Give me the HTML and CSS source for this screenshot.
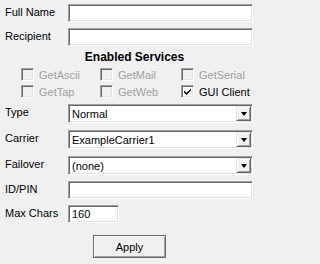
FILE: index.html
```html
<!DOCTYPE html>
<html>
<head>
<meta charset="utf-8">
<link rel="stylesheet" href="styles.css">
</head>
<body>
<div class="form">
  <div class="row r-name"><span class="lbl">Full Name</span><div class="field"></div></div>
  <div class="row r-recip"><span class="lbl">Recipient</span><div class="field"></div></div>
  <div class="title">Enabled Services</div>
  <div class="checks">
    <div class="chk disabled"><span class="box"></span><span class="ctext">GetAscii</span></div>
    <div class="chk disabled"><span class="box"></span><span class="ctext">GetMail</span></div>
    <div class="chk disabled"><span class="box"></span><span class="ctext">GetSerial</span></div>
    <div class="chk disabled"><span class="box"></span><span class="ctext">GetTap</span></div>
    <div class="chk disabled"><span class="box"></span><span class="ctext">GetWeb</span></div>
    <div class="chk"><span class="box checked"><svg width="9" height="9" viewBox="0 0 9 9"><path d="M1 3.5 L3.5 6 L8 1.5 L8 3.5 L3.5 8 L1 5.5 Z" fill="#000"/></svg></span><span class="ctext">GUI Client</span></div>
  </div>
  <div class="row r-type"><span class="lbl">Type</span><div class="select"><span class="sval">Normal</span><span class="dd"><span class="tri"></span></span></div></div>
  <div class="row r-sel"><span class="lbl">Carrier</span><div class="select"><span class="sval">ExampleCarrier1</span><span class="dd"><span class="tri"></span></span></div></div>
  <div class="row r-sel"><span class="lbl">Failover</span><div class="select"><span class="sval">(none)</span><span class="dd"><span class="tri"></span></span></div></div>
  <div class="row r-id"><span class="lbl">ID/PIN</span><div class="field"></div></div>
  <div class="row r-max"><span class="lbl">Max Chars</span><div class="field short"><span class="fval">160</span></div></div>
  <div class="actions"><button class="btn">Apply</button></div>
</div>
</body>
</html>
```

FILE: styles.css
```css
html, body {
  margin: 0;
  padding: 0;
  background: #f0f0f0;
}
body {
  width: 257px;
  height: 264px;
  overflow: hidden;
  font-family: "Liberation Sans", Arial, sans-serif;
  font-size: 11px;
  color: #000;
}
.form {
  display: flex;
  flex-direction: column;
  padding: 4px 4px 0 5px;
}
.row {
  display: flex;
  align-items: center;
}
.lbl {
  width: 63px;
  flex: none;
  line-height: 13px;
  position: relative;
  top: -1px;
}
.r-recip { margin-top: 6px; }
.r-type { margin-top: 4px; }
.r-sel { margin-top: 7px; }
.r-id { margin-top: 6px; }
.r-max { margin-top: 6px; }

.field {
  flex: 1;
  height: 14px;
  background: #fff;
  border-top: 1px solid #a0a0a0;
  border-left: 1px solid #a0a0a0;
  border-bottom: 1px solid #fff;
  border-right: 1px solid #fff;
  box-shadow: inset 1px 1px 0 #696969, inset -1px -1px 0 #e3e3e3;
  padding: 1px 2px;
  display: flex;
  align-items: center;
}
.field.short {
  flex: none;
  width: 45px;
}
.fval { padding-left: 1px; }

.title {
  text-align: center;
  font-weight: bold;
  font-size: 12px;
  line-height: 14px;
  margin-top: 4px;
  padding-left: 11px;
}

.checks {
  display: grid;
  grid-template-columns: 79px 81px auto;
  grid-auto-rows: 17px;
  padding-left: 16px;
  margin-top: 2px;
}
.chk {
  display: flex;
  align-items: center;
  gap: 5px;
}
.chk.disabled .ctext { color: #a0a0a0; }
.box {
  width: 9px;
  height: 9px;
  flex: none;
  background: #f0f0f0;
  border-top: 1px solid #a0a0a0;
  border-left: 1px solid #a0a0a0;
  border-bottom: 1px solid #fff;
  border-right: 1px solid #fff;
  box-shadow: inset 1px 1px 0 #696969, inset -1px -1px 0 #e3e3e3;
  padding: 1px;
  display: flex;
  align-items: center;
  justify-content: center;
}
.box.checked { background: #fff; }
.box svg { display: block; }

.select {
  flex: 1;
  height: 15px;
  background: #fff;
  border-top: 1px solid #a0a0a0;
  border-left: 1px solid #a0a0a0;
  border-bottom: 1px solid #fff;
  border-right: 1px solid #fff;
  box-shadow: inset 1px 1px 0 #696969, inset -1px -1px 0 #e3e3e3;
  padding: 1px 1px 1px 2px;
  display: flex;
  align-items: center;
}
.sval {
  flex: 1;
  padding-left: 1px;
}
.dd {
  width: 15px;
  height: 15px;
  box-sizing: border-box;
  background: #f0f0f0;
  border-top: 1px solid #e3e3e3;
  border-left: 1px solid #e3e3e3;
  border-bottom: 1px solid #696969;
  border-right: 1px solid #696969;
  box-shadow: inset 1px 1px 0 #fff, inset -1px -1px 0 #a0a0a0;
  display: flex;
  align-items: center;
  justify-content: center;
}
.tri {
  width: 0;
  height: 0;
  border-left: 3.5px solid transparent;
  border-right: 3.5px solid transparent;
  border-top: 4px solid #000;
}

.actions {
  display: flex;
  justify-content: center;
  margin-top: 12px;
}
.btn {
  width: 73px;
  height: 23px;
  background: #f0f0f0;
  border: 1px solid #696969;
  box-shadow: inset 1px 1px 0 #fff, inset -1px -1px 0 #a0a0a0;
  font-family: "Liberation Sans", Arial, sans-serif;
  font-size: 11px;
  color: #000;
  padding: 0;
  margin-left: 1px;
}
```
